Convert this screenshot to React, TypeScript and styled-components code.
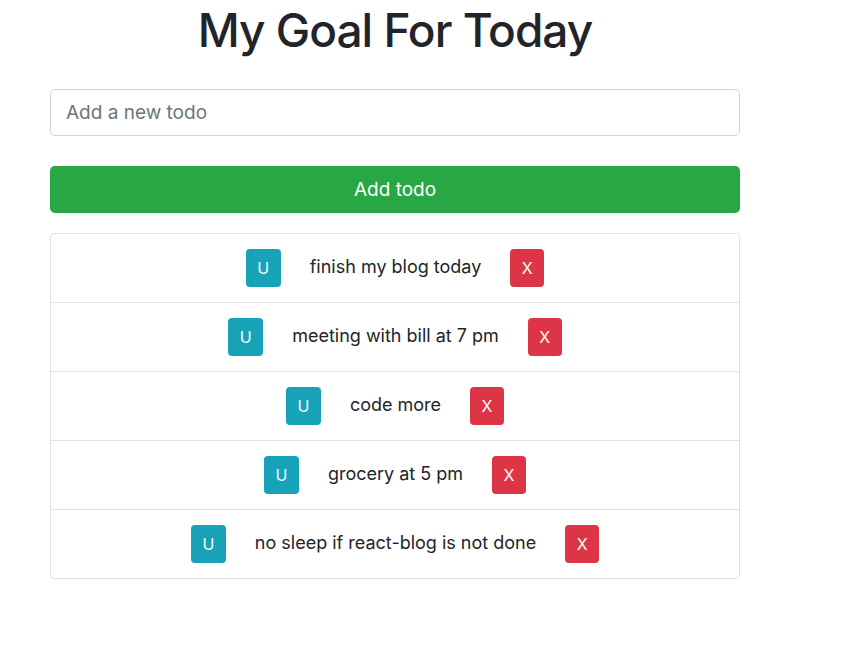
import React from "react";
import styled, { createGlobalStyle } from "styled-components";

const GlobalStyle = createGlobalStyle`
  * { box-sizing: border-box; }
  body {
    margin: 0;
    background: #fff;
    font-family: Inter, "Noto Sans", "Liberation Sans", sans-serif;
    color: #212529;
  }
`;

const Page = styled.div`
  width: 690px;
  margin-left: 50px;
  display: flex;
  flex-direction: column;
`;

const Title = styled.h1`
  margin: 0;
  font-size: 46px;
  font-weight: 500;
  line-height: 60px;
  text-align: center;
  letter-spacing: -1px;
  color: #212529;
`;

const Input = styled.input`
  margin-top: 29px;
  height: 47px;
  padding: 0 15px;
  font-family: inherit;
  font-size: 19px;
  color: #495057;
  border: 1px solid #ced4da;
  border-radius: 4.8px;
  outline: none;
  &::placeholder { color: #6c757d; }
`;

const AddButton = styled.button`
  margin-top: 30px;
  height: 47px;
  border: none;
  border-radius: 4.8px;
  background: #28a745;
  color: #fff;
  font-family: inherit;
  font-size: 19px;
`;

const List = styled.ul`
  list-style: none;
  margin: 20px 0 0;
  padding: 0;
  border: 1px solid #dee2e6;
  border-radius: 4px;
`;

const Item = styled.li`
  height: 69px;
  display: flex;
  align-items: center;
  justify-content: center;
  border-top: 1px solid #dee2e6;
  &:first-child { border-top: none; height: 68px; }
`;

const SmallButton = styled.button<{ $variant: "info" | "danger" }>`
  height: 38px;
  padding: 0 11.5px;
  border: none;
  border-radius: 4px;
  font-family: inherit;
  font-size: 16px;
  color: #fff;
  background: ${(p) => (p.$variant === "info" ? "#17a2b8" : "#dc3545")};
`;

const ItemText = styled.span`
  font-size: 18px;
  margin: 0 29px 4px;
  color: #212529;
`;

const todos = [
  "finish my blog today",
  "meeting with bill at 7 pm",
  "code more",
  "grocery at 5 pm",
  "no sleep if react-blog is not done",
];

export default function App() {
  return (
    <>
      <GlobalStyle />
      <Page>
        <Title>My Goal For Today</Title>
        <Input placeholder="Add a new todo" />
        <AddButton>Add todo</AddButton>
        <List>
          {todos.map((t) => (
            <Item key={t}>
              <SmallButton $variant="info">U</SmallButton>
              <ItemText>{t}</ItemText>
              <SmallButton $variant="danger">X</SmallButton>
            </Item>
          ))}
        </List>
      </Page>
    </>
  );
}
